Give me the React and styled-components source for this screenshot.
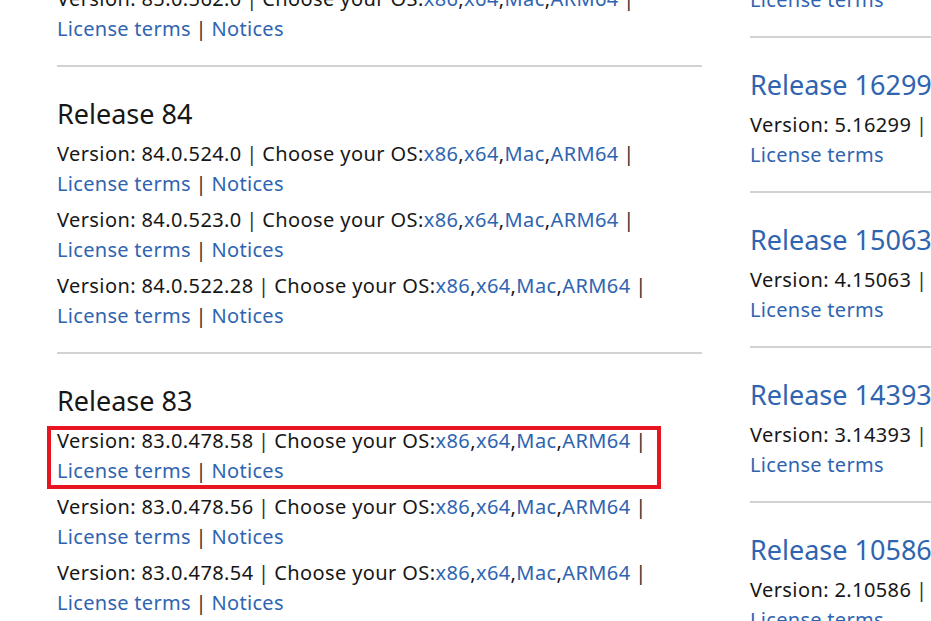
import React from "react";
import styled, { createGlobalStyle } from "styled-components";

const GlobalStyle = createGlobalStyle`
  html, body {
    margin: 0;
    padding: 0;
    background: #fff;
    overflow: hidden;
  }
  body {
    font-family: "Noto Sans", "Open Sans", sans-serif;
    color: #171717;
  }
`;

const leftTail = { version: "85.0.562.0" };

const leftReleases = [
  {
    title: "Release 84",
    versions: ["84.0.524.0", "84.0.523.0", "84.0.522.28"],
  },
  {
    title: "Release 83",
    versions: ["83.0.478.58", "83.0.478.56", "83.0.478.54"],
    highlight: "83.0.478.58",
  },
];

const rightReleases = [
  { title: "Release 16299", version: "5.16299" },
  { title: "Release 15063", version: "4.15063" },
  { title: "Release 14393", version: "3.14393" },
  { title: "Release 10586", version: "2.10586" },
];

function App() {
  return (
    <>
      <GlobalStyle />
      <Page>
        <Column $width={645} $offset={-17}>
          <OsEntry version={leftTail.version} />
          {leftReleases.map((r) => (
            <Section key={r.title}>
              <Divider />
              <Title>{r.title}</Title>
              <Entries>
                {r.versions.map((v) => (
                  <OsEntry key={v} version={v} highlighted={v === r.highlight} />
                ))}
              </Entries>
            </Section>
          ))}
        </Column>

        <Column $width={420} $offset={-46}>
          <LegacyEntry version="6.17134" />
          {rightReleases.map((r) => (
            <Section key={r.title}>
              <Divider />
              <Title $link>{r.title}</Title>
              <Entries>
                <LegacyEntry version={r.version} />
              </Entries>
            </Section>
          ))}
        </Column>
      </Page>
    </>
  );
}

function OsEntry({ version, highlighted }) {
  return (
    <Entry $highlighted={highlighted}>
      <Line>
        Version: {version} <Sep>|</Sep> Choose your OS:
        <OsLink>x86</OsLink>,<OsLink>x64</OsLink>,<OsLink>Mac</OsLink>,
        <OsLink>ARM64</OsLink> <Sep>|</Sep>
      </Line>
      <Line>
        <Link>License terms</Link> <Sep>|</Sep> <Link>Notices</Link>
      </Line>
    </Entry>
  );
}

function LegacyEntry({ version }) {
  return (
    <Entry>
      <Line>
        Version: {version} <Sep>|</Sep> <Download>Download</Download>
      </Line>
      <Line>
        <Link>License terms</Link>
      </Line>
    </Entry>
  );
}

const Page = styled.div`
  display: flex;
  align-items: flex-start;
  gap: 48px;
  padding-left: 57px;
  width: 1400px;
`;

const Column = styled.div`
  flex: none;
  width: ${(p) => p.$width}px;
  margin-top: ${(p) => p.$offset}px;
  display: flex;
  flex-direction: column;
`;

const Section = styled.section`
  display: flex;
  flex-direction: column;
`;

const Divider = styled.hr`
  margin: 22px 0 26px;
  border: none;
  height: 2px;
  background: #d2d2d2;
`;

const Title = styled.h2`
  margin: 0 0 5px;
  height: 40px;
  line-height: 41px;
  font-size: 27px;
  font-weight: 400;
  color: ${(p) => (p.$link ? "#2f64b0" : "#171717")};
`;

const Entries = styled.div`
  display: flex;
  flex-direction: column;
  gap: 6px;
`;

const Entry = styled.div`
  position: relative;
  font-size: 20px;
  line-height: 32px;
  letter-spacing: 0.4px;
  white-space: nowrap;

  ${(p) =>
    p.$highlighted &&
    `
    &::after {
      content: "";
      position: absolute;
      left: -10px;
      top: 1px;
      width: 614px;
      height: 63px;
      box-sizing: border-box;
      border: 4px solid #e8141f;
      pointer-events: none;
    }
  `}
`;

const Line = styled.div`
  height: 30px;
`;

const Link = styled.a`
  color: #2f64b0;
  text-decoration: none;
  letter-spacing: 0.3px;
  cursor: pointer;
`;

const OsLink = styled(Link)`
  letter-spacing: 0.4px;
`;

const Sep = styled.span`
  color: #333;
  margin: 0 -1px;
`;

const Download = styled.span`
  color: #b8650f;
`;

export default App;
